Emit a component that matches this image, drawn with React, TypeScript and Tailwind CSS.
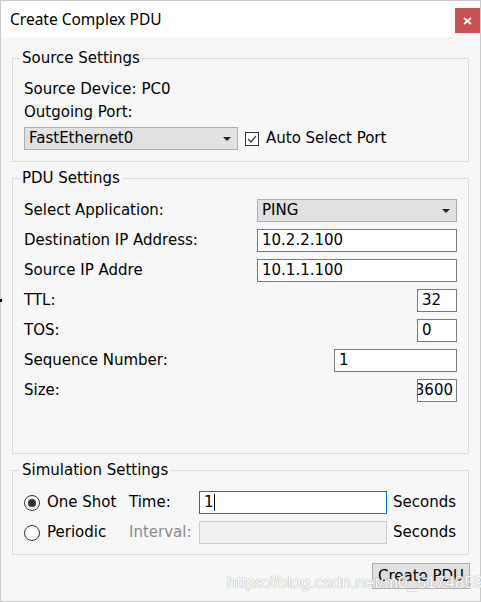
import type { ReactNode } from "react";

const font = { fontFamily: '"DejaVu Sans", "Liberation Sans", sans-serif' };

function Group({ title, className, children }: { title: string; className?: string; children: ReactNode }) {
  return (
    <fieldset className={`w-[457px] border border-[#dcdcdc] px-[11px] ${className ?? ""}`}>
      <legend className="ml-[-4px] px-[2px] h-[18px] leading-[18px]">{title}</legend>
      {children}
    </fieldset>
  );
}

function Arrow() {
  return (
    <svg width="8" height="4" viewBox="0 0 8 4">
      <path d="M0 0 L8 0 L4 4 Z" fill="#222" />
    </svg>
  );
}

function Select({ value, w, pl }: { value: string; w: string; pl: string }) {
  return (
    <div className={`${w} h-[23px] bg-[#e1e1e1] border border-[#adadad] flex items-center justify-between ${pl} pr-[6px]`}>
      <span>{value}</span>
      <Arrow />
    </div>
  );
}

function Field({ value, w, clip }: { value: string; w: string; clip?: boolean }) {
  return (
    <div
      className={`${w} h-[23px] bg-white border border-[#7a7a7a] flex items-center overflow-hidden ${
        clip ? "justify-end pr-[3px]" : "pl-[4px]"
      }`}
    >
      <span className="whitespace-nowrap">{value}</span>
    </div>
  );
}

function Row({ label, children }: { label: string; children: ReactNode }) {
  return (
    <div className="h-[23px] flex items-center justify-between">
      <span>{label}</span>
      {children}
    </div>
  );
}

function Radio({ checked }: { checked?: boolean }) {
  return (
    <div className="w-[16px] h-[16px] rounded-full border border-[#333] bg-white flex items-center justify-center">
      {checked && <div className="w-[8px] h-[8px] rounded-full bg-[#333]" />}
    </div>
  );
}

export default function App() {
  return (
    <div
      className="relative w-[481px] h-[602px] border border-[#c9c9c9] bg-[#f7f7f7] text-[15px] text-black flex flex-col"
      style={font}
    >
      {/* title bar */}
      <div className="h-[36px] bg-white flex items-start justify-between pl-[9px] pt-[7px]">
        <span
          className="text-[15.5px] leading-[22px]"
          style={{ fontFamily: '"Noto Sans", "Liberation Sans", sans-serif' }}
        >
          Create Complex PDU
        </span>
        <div className="w-[25px] h-[25px] bg-[#c75050] flex items-center justify-center">
          <svg width="9" height="8" viewBox="0 0 9 8">
            <path d="M1 1 L8 7 M8 1 L1 7" stroke="white" strokeWidth="1.8" />
          </svg>
        </div>
      </div>

      <div className="flex flex-col pl-[11px] pr-[10px] pt-[12px]">
        <Group title="Source Settings" className="pt-[13px] pb-[11px]">
          <div className="h-[18px] leading-[18px]">Source Device: PC0</div>
          <div className="h-[18px] leading-[18px] mt-[5px]">Outgoing Port:</div>
          <div className="mt-[6px] flex items-center">
            <Select value="FastEthernet0" w="w-[214px]" pl="pl-[4px]" />
            <div className="ml-[7px] w-[14px] h-[14px] border border-[#333] bg-white flex items-center justify-center">
              <svg width="10" height="8" viewBox="0 0 10 8">
                <path d="M1 4 L4 7 L9 1" fill="none" stroke="#333" strokeWidth="1.2" />
              </svg>
            </div>
            <span className="ml-[7px]">Auto Select Port</span>
          </div>
        </Group>

        <Group title="PDU Settings" className="mt-[7px] pt-[12px] pb-[51px]">
          <div className="flex flex-col gap-[7px]">
            <Row label="Select Application:">
              <Select value="PING" w="w-[200px]" pl="pl-[4px]" />
            </Row>
            <Row label="Destination IP Address:">
              <Field value="10.2.2.100" w="w-[200px]" />
            </Row>
            <Row label="Source IP Addre">
              <Field value="10.1.1.100" w="w-[200px]" />
            </Row>
            <Row label="TTL:">
              <Field value="32" w="w-[40px]" />
            </Row>
            <Row label="TOS:">
              <Field value="0" w="w-[40px]" />
            </Row>
            <Row label="Sequence Number:">
              <Field value="1" w="w-[123px]" />
            </Row>
            <Row label="Size:">
              <Field value="3600" w="w-[40px]" clip />
            </Row>
          </div>
        </Group>

        <Group title="Simulation Settings" className="mt-[7px] pt-[12px] pb-[10px]">
          <div className="flex flex-col gap-[7px]">
            <div className="h-[23px] flex items-center">
              <div className="w-[105px] flex items-center">
                <Radio checked />
                <span className="ml-[7px]">One Shot</span>
              </div>
              <span className="w-[70px]">Time:</span>
              <div className="w-[188px] h-[23px] bg-white border border-[#0078d7] flex items-center pl-[4px]">
                <span>1</span>
                <span className="w-[1px] h-[17px] bg-black" />
              </div>
              <span className="ml-[6px]">Seconds</span>
            </div>
            <div className="h-[23px] flex items-center">
              <div className="w-[105px] flex items-center">
                <Radio />
                <span className="ml-[7px]">Periodic</span>
              </div>
              <span className="w-[70px] text-[#8a8a8a]">Interval:</span>
              <div className="w-[188px] h-[23px] bg-[#f0f0f0] border border-[#cccccc]" />
              <span className="ml-[6px]">Seconds</span>
            </div>
          </div>
        </Group>

        <div className="mt-[8px] flex justify-end">
          <button className="w-[98px] h-[26px] bg-[#e1e1e1] border border-[#adadad] text-[15px] leading-[24px]">
            Create PDU
          </button>
        </div>
      </div>

      {/* watermark */}
      <div
        className="absolute left-[226px] top-[569px] text-[17px] text-[#ffffff] opacity-90 whitespace-nowrap"
        style={{ fontFamily: '"Liberation Sans", Arial, sans-serif', textShadow: "0 0 1px #a0a0a0, 0 0 1px #a0a0a0" }}
      >
        https://blog.csdn.net/m0_51748591
      </div>

      <div className="absolute left-[-1px] top-[298px] w-[2px] h-[3px] bg-black" />
    </div>
  );
}
